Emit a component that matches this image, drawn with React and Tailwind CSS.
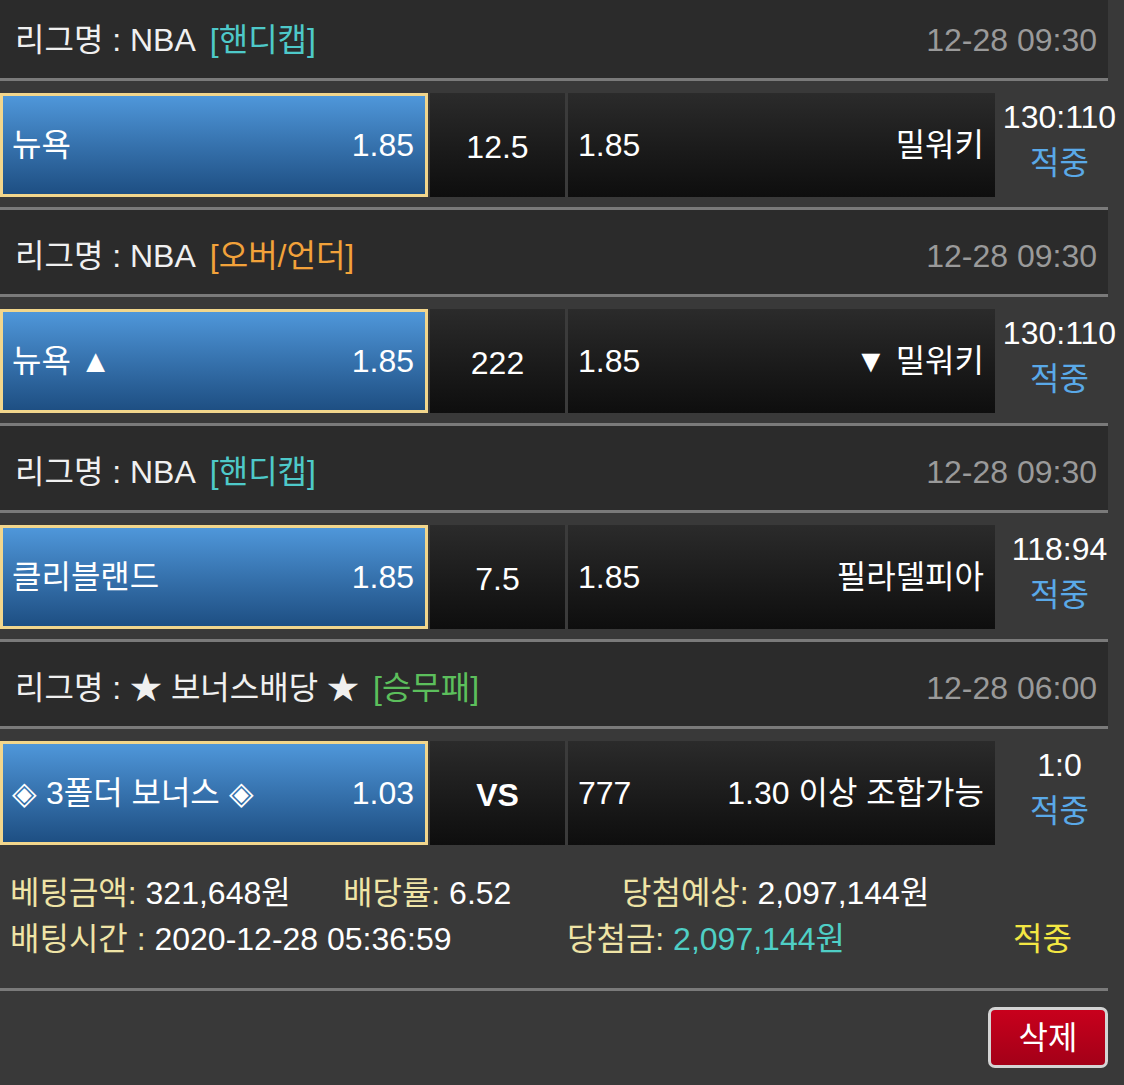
import React from 'react';

const bets = [
    {
        league: 'NBA',
        tag: '[핸디캡]',
        tagColor: 'text-[#4ec9c9]',
        date: '12-28 09:30',
        home: '뉴욕',
        homeOdds: '1.85',
        mid: '12.5',
        awayOdds: '1.85',
        away: '밀워키',
        score: '130:110',
    },
    {
        league: 'NBA',
        tag: '[오버/언더]',
        tagColor: 'text-[#f2a23a]',
        date: '12-28 09:30',
        home: '뉴욕 ▲',
        homeOdds: '1.85',
        mid: '222',
        awayOdds: '1.85',
        away: '▼ 밀워키',
        score: '130:110',
    },
    {
        league: 'NBA',
        tag: '[핸디캡]',
        tagColor: 'text-[#4ec9c9]',
        date: '12-28 09:30',
        home: '클리블랜드',
        homeOdds: '1.85',
        mid: '7.5',
        awayOdds: '1.85',
        away: '필라델피아',
        score: '118:94',
    },
    {
        league: '★ 보너스배당 ★',
        tag: '[승무패]',
        tagColor: 'text-[#5cbf5c]',
        date: '12-28 06:00',
        home: '◈ 3폴더 보너스 ◈',
        homeOdds: '1.03',
        mid: 'VS',
        bold: true,
        awayOdds: '777',
        away: '1.30 이상 조합가능',
        score: '1:0',
    },
];

function BetBlock({ bet, first }) {
    return (
        <div>
            {!first && <div className="h-[3px] w-[1108px] bg-[#7a7a7a]" />}
            <div className="flex h-[84px] w-[1108px] items-center justify-between bg-[#2b2b2b] pt-[8px] pl-[15px] pr-[11px]">
                <div className="text-[#f0f0f0]">
                    리그명 : {bet.league}
                    <span className={`ml-[14px] ${bet.tagColor}`}>{bet.tag}</span>
                </div>
                <div className="text-[#9a9a9a]">{bet.date}</div>
            </div>
            <div className="h-[3px] w-[1108px] bg-[#7a7a7a]" />
            <div className="flex pt-[12px] pb-[10px]">
                <div className="flex h-[104px] w-[428px] items-center justify-between border-[3px] border-[#f2d68c] bg-gradient-to-b from-[#4f97da] to-[#1e4f83] pl-[9px] pr-[11px] text-white">
                    <span>{bet.home}</span>
                    <span>{bet.homeOdds}</span>
                </div>
                <div className="ml-[2px] flex h-[104px] w-[135px] items-center justify-center bg-gradient-to-b from-[#2b2b2b] to-[#0e0e0e] pt-[4px] text-white">
                    <span className={bet.bold ? 'font-bold' : ''}>{bet.mid}</span>
                </div>
                <div className="h-[104px] w-[3px] bg-[#3b3b3b]" />
                <div className="flex h-[104px] w-[427px] items-center justify-between bg-gradient-to-b from-[#2b2b2b] to-[#0e0e0e] pl-[10px] pr-[11px] text-white">
                    <span>{bet.awayOdds}</span>
                    <span>{bet.away}</span>
                </div>
                <div className="flex flex-1 flex-col items-center pt-[1px] leading-[46px]">
                    <span className="text-white">{bet.score}</span>
                    <span className="text-[#5aa9e8]">적중</span>
                </div>
            </div>
        </div>
    );
}

export default function App() {
    return (
        <div
            className="h-[1085px] w-[1124px] overflow-hidden bg-[#393939] text-[32px]"
            style={{ fontFamily: '"Liberation Sans", "Noto Sans CJK KR", sans-serif' }}
        >
            <div className="-mt-[6px]">
                {bets.map((bet, i) => (
                    <BetBlock key={i} bet={bet} first={i === 0} />
                ))}
            </div>

            <div className="pt-[15px] pb-[26px] pl-[10px] leading-[46px]">
                <div className="flex">
                    <div className="w-[333px]">
                        <span className="text-[#efe4a6]">베팅금액: </span>
                        <span className="text-white">321,648원</span>
                    </div>
                    <div className="w-[279px]">
                        <span className="text-[#efe4a6]">배당률: </span>
                        <span className="text-white">6.52</span>
                    </div>
                    <div>
                        <span className="text-[#efe4a6]">당첨예상: </span>
                        <span className="text-white">2,097,144원</span>
                    </div>
                </div>
                <div className="flex">
                    <div className="w-[557px]">
                        <span className="text-[#efe4a6]">배팅시간 : </span>
                        <span className="text-white">2020-12-28 05:36:59</span>
                    </div>
                    <div className="w-[446px]">
                        <span className="text-[#efe4a6]">당첨금: </span>
                        <span className="text-[#4fcfc6]">2,097,144원</span>
                    </div>
                    <div className="text-[#f3e743]">적중</div>
                </div>
            </div>
            <div className="h-[3px] w-[1108px] bg-[#7a7a7a]" />
            <div className="flex w-[1108px] justify-end pt-[16px]">
                <button className="flex h-[61px] w-[120px] items-center justify-center rounded-[7px] border-[3px] border-[#d4d4d4] bg-gradient-to-b from-[#c8001c] to-[#a30018] text-white">
                    삭제
                </button>
            </div>
        </div>
    );
}
